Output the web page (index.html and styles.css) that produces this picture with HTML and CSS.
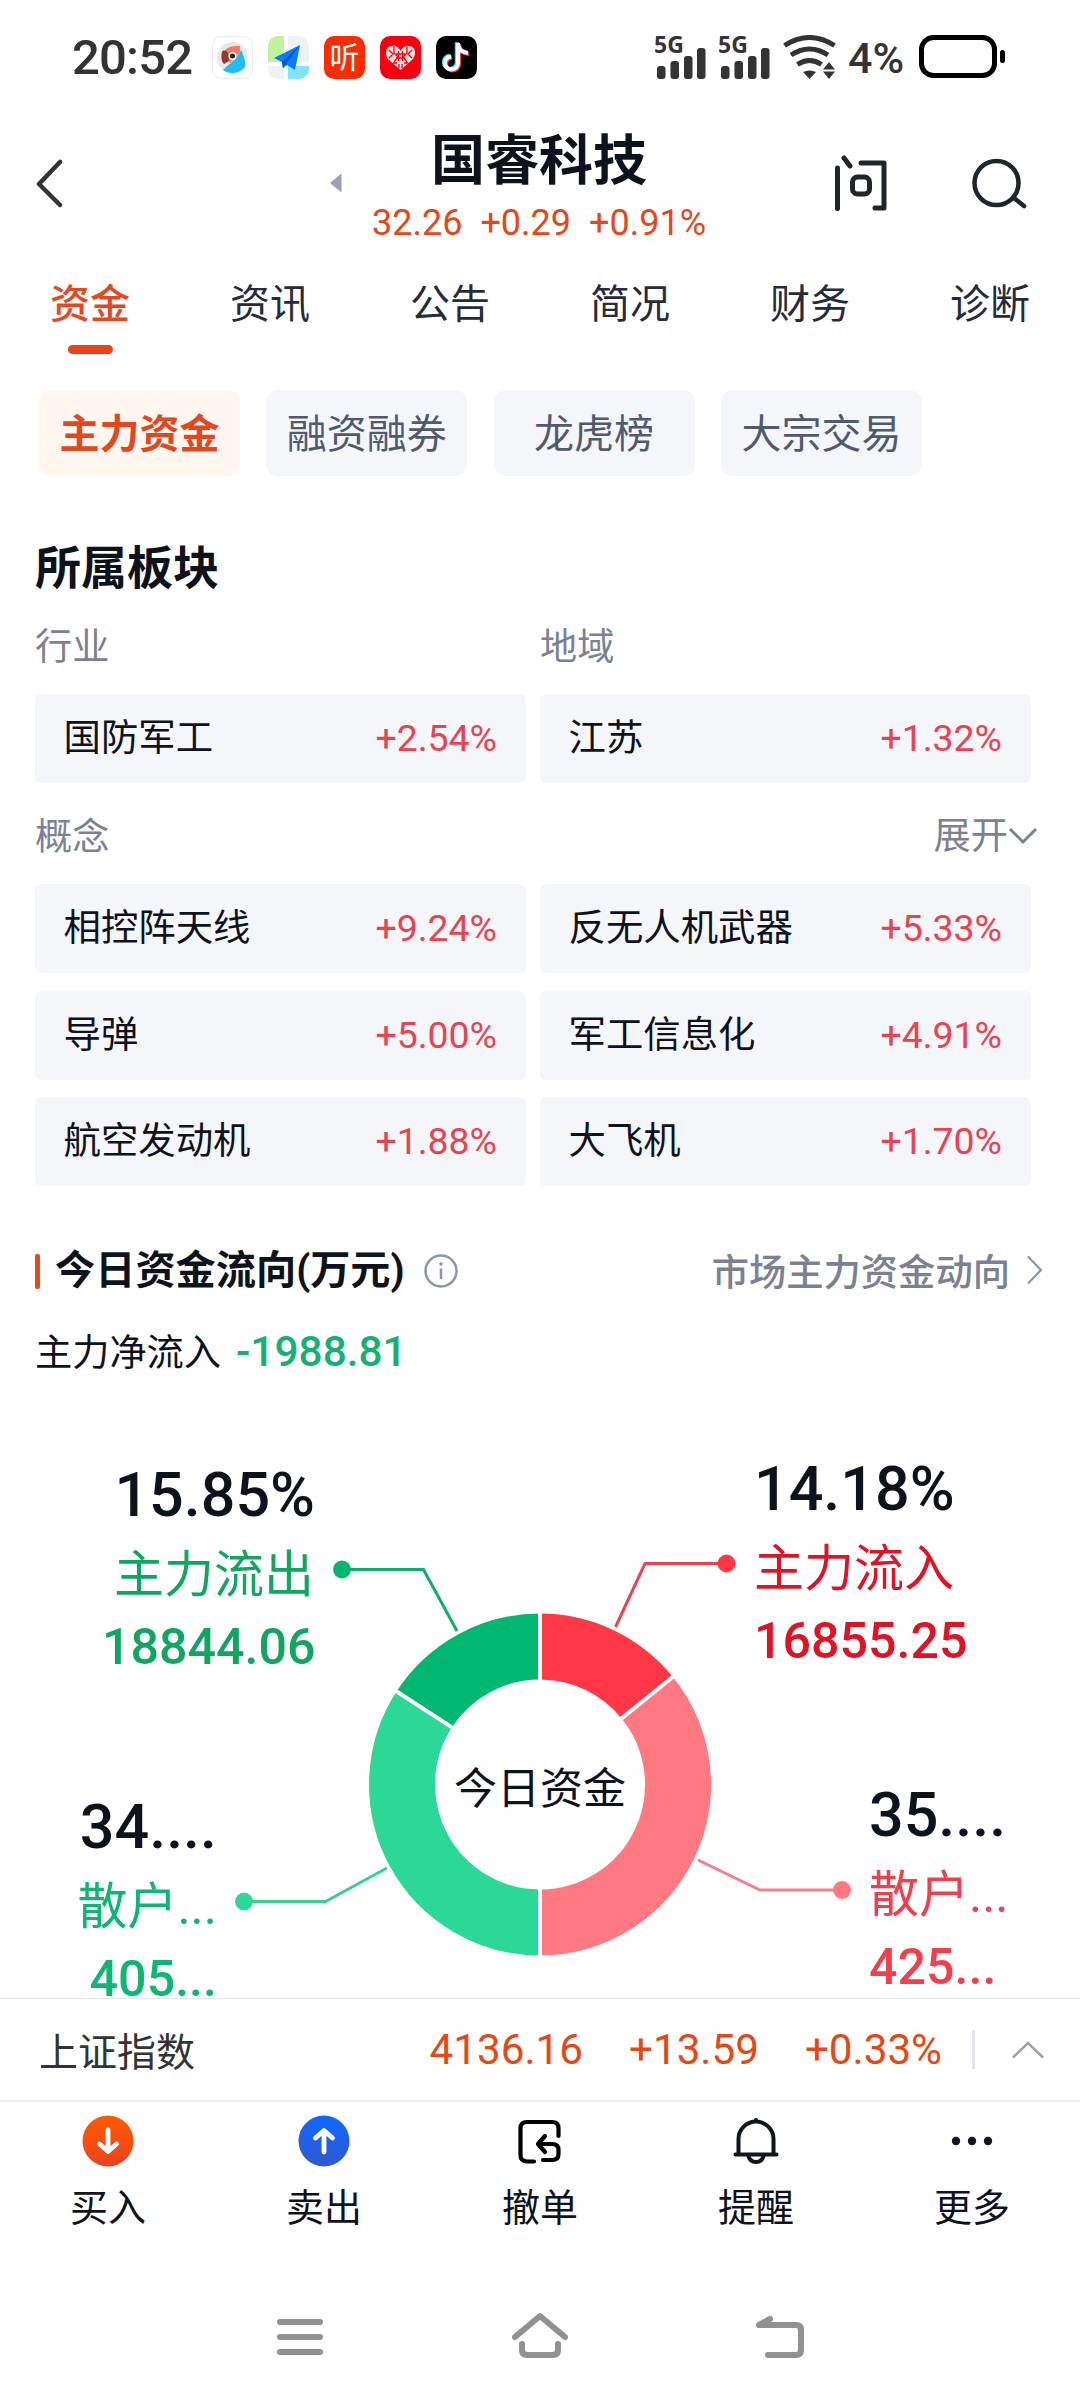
FILE: index.html
```html
<!DOCTYPE html>
<html lang="zh-CN">
<head>
    <meta charset="UTF-8">
    <meta name="viewport" content="width=device-width, initial-scale=1.0">
    <title>国睿科技 - 资金</title>
    <link rel="stylesheet" href="styles.css">
</head>
<body>
    <div class="status-bar">
        <div class="clock">20:52</div>
        <div class="apps">
            <svg width="41" height="43" viewBox="0 0 41 43">
                <rect x=".5" y=".5" width="40" height="42" rx="9" fill="#fff" stroke="#ececec"/>
                <circle cx="20.500" cy="21.500" r="15.500" fill="#e8e8e8"/>
                <path d="M29 14C32 20 34 27 33 31C27 39 16 38 11 34C17 28 24 24 29 14Z" fill="#1fbdf0"/>
                <path d="M13 14C17 10 22 10 28 10V16L18 27L13 22Z" fill="#ff7668"/>
                <path d="M10 16C11 14 14 14 16 17L17 25L12 28C9 25 9 20 10 16Z" fill="#923a2b"/>
                <circle cx="20.500" cy="20" r="4" fill="#fff"/>
                <circle cx="20.500" cy="20" r="2.500" fill="#152638"/>
            </svg>
            <svg width="41" height="43" viewBox="0 0 41 43">
                <clipPath id="mapClip"><rect width="41" height="43" rx="10"/></clipPath>
                <g clip-path="url(#mapClip)">
                    <rect width="41" height="43" fill="#edf2f2"/>
                    <rect width="16" height="26" fill="#c0f39e"/>
                    <rect x="20" y="30" width="21" height="13" fill="#80e4ff"/>
                    <path d="M18 0V43M0 28H41" stroke="#fff" stroke-width="4"/>
                </g>
                <path d="M32 9L6 22L14 26L15 32L19 29L27 34Z" fill="#087df8"/>
                <path d="M32 9L14 26L15 32L18 28Z" fill="#0757c9"/>
            </svg>
            <svg width="41" height="43" viewBox="0 0 41 43">
                <rect width="41" height="43" rx="10" fill="#fa2c04"/>
                <text class="ting" x="20.500" y="32" text-anchor="middle">听</text>
            </svg>
            <svg width="41" height="43" viewBox="0 0 41 43">
                <rect width="41" height="43" rx="10" fill="#f5000f"/>
                <path d="M20.500 34L8 23C4 17 6 10 12 10C16 9 19 12 20.500 15C22 12 25 9 29 10C35 10 37 17 33 23Z" fill="#ffdfe0"/>
                <path d="M9 14l4 4-4 4m5-12v7l4 4-4 5m13-16v7l-4 4 4 5m5-12l-4 4 4 4M16 18h9M16 22h9M18.500 15v10m4-10v10M13 27h4m7 0h4m-9 1v4m3-4v4" fill="none" stroke="#f5000f" stroke-width="1.300"/>
            </svg>
            <svg width="41" height="43" viewBox="0 0 41 43">
                <rect width="41" height="43" rx="10" fill="#000"/>
                <g fill="none" stroke-width="4">
                    <path d="M22 7V27A6.500 6.500 0 1 1 15 20.500M22 8C23 14 27 17 32 17" stroke="#25f4ee" transform="translate(-1.200 -.800)"/>
                    <path d="M22 7V27A6.500 6.500 0 1 1 15 20.500M22 8C23 14 27 17 32 17" stroke="#fe2c55" transform="translate(1.200 1)"/>
                    <path d="M22 7V27A6.500 6.500 0 1 1 15 20.500M22 8C23 14 27 17 32 17" stroke="#fff"/>
                </g>
            </svg>
        </div>
        <div class="signals">
            <div class="signal">
                <span>5G</span>
                <svg width="49" height="31" viewBox="0 0 49 31" fill="#333">
                    <rect x="0" y="18" width="8.500" height="13" rx="3"/><rect x="13.500" y="13" width="8.500" height="18" rx="3"/><rect x="27" y="8" width="8.500" height="23" rx="3"/><rect x="40" y="0" width="8.500" height="31" rx="3"/>
                </svg>
            </div>
            <div class="signal">
                <span>5G</span>
                <svg width="49" height="31" viewBox="0 0 49 31" fill="#333">
                    <rect x="0" y="18" width="8.500" height="13" rx="3"/><rect x="13.500" y="13" width="8.500" height="18" rx="3"/><rect x="27" y="8" width="8.500" height="23" rx="3"/><rect x="40" y="0" width="8.500" height="31" rx="3"/>
                </svg>
            </div>
            <svg class="wifi" width="54" height="44" viewBox="0 0 54 44">
                <g fill="none" stroke="#333" stroke-width="5">
                    <path d="M1.500 10.500Q26.500-5.500 51.500 10.500M8 20Q26.500 8 45 20M14.500 29.500Q26.500 21.500 38.500 29.500"/>
                </g>
                <path d="M20 37Q26.500 34 33 37L26.500 44Z" fill="#333"/>
                <path d="M40 34.500L46 27L52 34.500ZM40 36.500L46 44L52 36.500Z" fill="#333"/>
            </svg>
        </div>
        <div class="battery-text">4%</div>
        <svg class="battery" width="87" height="43" viewBox="0 0 87 43">
            <rect x="2.500" y="2.500" width="73" height="38" rx="12" fill="none" stroke="#000" stroke-width="5"/>
            <rect x="81" y="15" width="5" height="13" rx="2.500"/>
        </svg>
    </div>

    <div class="header">
        <svg class="back" width="30" height="50" viewBox="0 0 30 50"><path d="M25 3L4 25L25 46" fill="none" stroke="#333" stroke-width="4.500" stroke-linecap="round" stroke-linejoin="round"/></svg>
        <svg class="prev" width="12" height="20" viewBox="0 0 12 20"><path d="M11.500.500V19.500L1 11Q0 10 1 9Z" fill="#9aa1b3"/></svg>
        <div class="stock">
            <h1>国睿科技</h1>
            <div class="quote"><span>32.26</span><span>+0.29</span><span>+0.91%</span></div>
        </div>
        <svg class="ask" width="54" height="58" viewBox="0 0 54 58" fill="none" stroke="#20242b" stroke-width="5" stroke-linecap="round" stroke-linejoin="round">
            <path d="M3.500 13V53.500M10 3L16 11M27 8H50V53H41"/>
            <rect x="18.500" y="22" width="17" height="17" rx="5"/>
        </svg>
        <svg class="search" width="56" height="54" viewBox="0 0 56 54" fill="none" stroke="#20242b" stroke-width="4.500" stroke-linecap="round">
            <circle cx="25.500" cy="26" r="22"/><path d="M43 41L53 49"/>
        </svg>
    </div>

    <div class="tabs">
        <div class="tab active">资金</div>
        <div class="tab">资讯</div>
        <div class="tab">公告</div>
        <div class="tab">简况</div>
        <div class="tab">财务</div>
        <div class="tab">诊断</div>
    </div>

    <div class="pills">
        <div class="pill active">主力资金</div>
        <div class="pill">融资融券</div>
        <div class="pill">龙虎榜</div>
        <div class="pill">大宗交易</div>
    </div>

    <div class="sectors">
        <h2>所属板块</h2>
        <div class="labels"><span>行业</span><span>地域</span></div>
        <div class="grid">
            <div class="sector"><span>国防军工</span><span class="up">+2.54%</span></div>
            <div class="sector"><span>江苏</span><span class="up">+1.32%</span></div>
        </div>
        <div class="labels concept">
            <span>概念</span>
            <span class="expand">展开<svg width="30" height="20" viewBox="0 0 30 20"><path d="M2 3L15 16L28 3" fill="none" stroke="#7a8193" stroke-width="3"/></svg></span>
        </div>
        <div class="grid">
            <div class="sector"><span>相控阵天线</span><span class="up">+9.24%</span></div>
            <div class="sector"><span>反无人机武器</span><span class="up">+5.33%</span></div>
            <div class="sector"><span>导弹</span><span class="up">+5.00%</span></div>
            <div class="sector"><span>军工信息化</span><span class="up">+4.91%</span></div>
            <div class="sector"><span>航空发动机</span><span class="up">+1.88%</span></div>
            <div class="sector"><span>大飞机</span><span class="up">+1.70%</span></div>
        </div>
    </div>

    <div class="flow">
        <div class="flow-head">
            <h3>今日资金流向(万元)</h3>
            <svg width="36" height="36" viewBox="0 0 36 36"><circle cx="18" cy="18" r="15.500" fill="none" stroke="#8e95a6" stroke-width="2.500"/><path d="M18 15.500V26" stroke="#8e95a6" stroke-width="2.500"/><circle cx="18" cy="11" r="1.800" fill="#8e95a6"/></svg>
            <a class="market">市场主力资金动向<svg width="18" height="30" viewBox="0 0 18 30"><path d="M2 1.500L15 15L2 28.500" fill="none" stroke="#8e95a6" stroke-width="2.200"/></svg></a>
        </div>
        <div class="net">主力净流入<span>-1988.81</span></div>
    </div>

    <!-- fund flow donut -->
    <svg class="donut" width="1080" height="621" viewBox="0 1377 1080 621">
        <g fill="none" stroke-width="66">
            <path d="M540 1646.500A138 138 0 0 1 647.250 1697.650" stroke="#ff3747"/>
            <path d="M647.250 1697.650A138 138 0 0 1 540 1922.500" stroke="#ff7983"/>
            <path d="M540 1922.500A138 138 0 0 1 424.300 1709.300" stroke="#2cd897"/>
            <path d="M424.300 1709.300A138 138 0 0 1 540 1646.500" stroke="#02b871"/>
        </g>
        <path d="M540 1610V1682M540 1887V1959M619.200 1720.400L675.100 1675M453.600 1728.400L393.200 1689.200" stroke="#fff" stroke-width="4"/>
        <g fill="none" stroke-width="3">
            <path d="M342 1569.500H423.500L457 1631" stroke="#12ad6e"/>
            <path d="M726 1563.500H645L615.500 1627" stroke="#e84452"/>
            <path d="M244 1901.500H325.500L387 1868" stroke="#38cf96"/>
            <path d="M842 1890H760L698 1860" stroke="#f2808a"/>
        </g>
        <circle cx="342" cy="1569.500" r="9" fill="#02b871"/>
        <circle cx="726.500" cy="1563.500" r="9" fill="#ff3747"/>
        <circle cx="244" cy="1901.500" r="9" fill="#2cd897"/>
        <circle cx="842" cy="1890" r="9" fill="#ff7983"/>
        <text class="center" x="540" y="1804" text-anchor="middle">今日资金</text>
        <g text-anchor="end">
            <text class="percent" x="315" y="1515.500">15.85%</text>
            <text class="name out" x="314" y="1591.500">主力流出</text>
            <text class="amount out" x="315.500" y="1663.500">18844.06</text>
            <text class="percent" x="217" y="1847.500">34....</text>
            <text class="name out-light" x="217" y="1923.500">散户...</text>
            <text class="amount out-light" x="217" y="1995.500">405...</text>
        </g>
        <text class="percent" x="754" y="1509.500">14.18%</text>
        <text class="name in" x="754" y="1585.500">主力流入</text>
        <text class="amount in" x="754" y="1657.500">16855.25</text>
        <text class="percent" x="869" y="1835.500">35....</text>
        <text class="name in-light" x="869" y="1911.500">散户...</text>
        <text class="amount in-light" x="869" y="1983.500">425...</text>
    </svg>

    <div class="index-bar">
        <span class="index-name">上证指数</span>
        <span class="value">4136.16</span>
        <span class="value">+13.59</span>
        <span class="value">+0.33%</span>
        <i></i>
        <svg width="34" height="20" viewBox="0 0 34 20"><path d="M2 17.500L17 3L32 17.500" fill="none" stroke="#9aa1b0" stroke-width="2.500"/></svg>
    </div>

    <div class="toolbar">
        <div class="tool">
            <svg width="52" height="52" viewBox="0 0 52 52">
                <linearGradient id="buy" x1="0" y1="0" x2="0" y2="1"><stop stop-color="#ff5c00"/><stop offset="1" stop-color="#eb4120"/></linearGradient>
                <circle cx="26" cy="26" r="25.500" fill="url(#buy)"/><path d="M26 15V36M17.500 29L26 36.500L34.500 29" fill="none" stroke="#fff" stroke-width="4.800" stroke-linecap="round" stroke-linejoin="round"/>
            </svg>
            买入
        </div>
        <div class="tool">
            <svg width="52" height="52" viewBox="0 0 52 52">
                <linearGradient id="sell" x1="0" y1="0" x2="0" y2="1"><stop stop-color="#0f68ff"/><stop offset="1" stop-color="#3059cf"/></linearGradient>
                <circle cx="26" cy="26" r="25.500" fill="url(#sell)"/><path d="M26 37V16M17.500 23L26 15.500L34.500 23" fill="none" stroke="#fff" stroke-width="4.800" stroke-linecap="round" stroke-linejoin="round"/>
            </svg>
            卖出
        </div>
        <div class="tool">
            <svg width="52" height="52" viewBox="0 0 52 52" fill="none" stroke="#000" stroke-width="4.200" stroke-linecap="round" stroke-linejoin="round">
                <path d="M20 46.500H13Q6.500 46.500 6.500 40V13Q6.500 7 13 7H38Q44.500 7 44.500 13V21"/>
                <path d="M29 45H38Q44.500 45 44.500 39V35Q44.500 29 38 29H25M31 21L24 29L31 37"/>
            </svg>
            撤单
        </div>
        <div class="tool">
            <svg width="52" height="52" viewBox="0 0 52 52" fill="none" stroke="#11151d" stroke-width="4" stroke-linecap="round">
                <path d="M5.500 39.500H46.500M8.500 39V24A17.500 17.500 0 0 1 43.500 24V39M26 5V6"/>
                <path d="M18.500 41Q20 47 26 47Q32 47 33.500 41"/>
            </svg>
            提醒
        </div>
        <div class="tool">
            <svg width="52" height="52" viewBox="0 0 52 52" fill="#11151d"><circle cx="10" cy="26" r="4.200"/><circle cx="26" cy="26" r="4.200"/><circle cx="42" cy="26" r="4.200"/></svg>
            更多
        </div>
    </div>

    <div class="system-nav">
        <svg width="60" height="50" viewBox="0 0 60 50"><path d="M10 10H50M10 25H50M10 40H50"/></svg>
        <svg width="60" height="50" viewBox="0 0 60 50"><path d="M5 25L30 4L55 25M12 32V38Q12 43 17 43H43Q48 43 48 38V32"/></svg>
        <svg width="60" height="50" viewBox="0 0 60 50"><path d="M20 7L9 13H46Q51 13 51 18V38Q51 43 46 43H18"/></svg>
    </div>
</body>
</html>
```

FILE: styles.css
```css
* { box-sizing: border-box; }
body { margin: 0; width: 1080px; height: 2400px; overflow: hidden; background: #fff; color: #0d121d; font-family: Roboto, "Noto Sans CJK SC", sans-serif; display: flex; flex-direction: column; }
body > * { flex-shrink: 0; }
h1, h2, h3 { margin: 0; }
svg { display: block; flex-shrink: 0; }

.status-bar { height: 115px; padding: 0 74px 0 72px; display: flex; align-items: center; color: #333; }
.clock { width: 140px; font-size: 49px; font-weight: 500; line-height: 60px; letter-spacing: -0.8px; }
.apps { display: flex; gap: 15px; margin-top: -1px; }
.ting { font-size: 30px; fill: #fff; }
.signals { display: flex; align-items: flex-end; margin: 0 0 2px auto; gap: 15px; }
.signal { width: 49px; height: 44px; display: flex; flex-direction: column; justify-content: flex-end; position: relative; }
.signal span { position: absolute; left: -3px; top: -3px; font: bold 23px/24px "Noto Sans", sans-serif; }
.wifi { margin-left: -2px; }
.battery-text { margin-left: 11px; width: 71px; font-size: 43px; font-weight: 500; line-height: 60px; }
.battery { margin-top: -2px; }

.header { height: 145px; display: flex; align-items: flex-start; padding-left: 35px; }
.back { margin-top: 44px; }
.prev { margin: 58px 0 0 265px; }
.stock { width: 394px; display: flex; flex-direction: column; align-items: center; padding-top: 17px; }
.stock h1 { font-size: 54px; font-weight: bold; line-height: 60px; }
.quote { display: flex; gap: 18px; margin-top: 9px; font-size: 36px; line-height: 44px; color: #e2481c; }
.ask { margin: 40px 0 0 98px; }
.search { margin: 42px 0 0 83px; }

.tabs { height: 105px; display: flex; }
.tab { width: 180px; padding-top: 15px; text-align: center; font-size: 40px; line-height: 60px; color: #252b3a; }
.tab.active { font-weight: 500; color: #e5481e; }
.tab.active::after { content: ""; display: block; width: 45px; height: 9px; margin: 10px auto 0; border-radius: 5px; background: #ee431a; }

.pills { display: flex; gap: 26.3px; margin: 25px 0 0 39px; }
.pill { width: 201px; height: 86px; border-radius: 12px; background: #f5f6fa; color: #505a6e; font-size: 40px; line-height: 90px; text-align: center; }
.pill.active { background: #fff6f0; color: #e2481f; font-weight: bold; }

.sectors { width: 996px; margin: 62px 0 0 35px; }
.sectors h2 { font-size: 46px; line-height: 60px; font-weight: bold; }
.labels { display: grid; grid-template-columns: 491px 491px; column-gap: 14px; margin: 23px 0; height: 50px; line-height: 53px; font-size: 37.2px; color: #7a8193; }
.concept { margin-top: 28px; display: flex; justify-content: space-between; }
.expand { display: flex; align-items: center; margin-right: -7px; }
.grid { display: grid; grid-template-columns: 491px 491px; column-gap: 14px; row-gap: 17.5px; }
.sector { display: flex; justify-content: space-between; height: 89px; padding: 0 29px 0 28.5px; border-radius: 6px; background: #f5f6fa; font-size: 37.4px; line-height: 88px; }
.up { color: #e84350; }

.flow { padding: 60px 36px 0 35px; }
.flow-head { display: flex; align-items: center; height: 50px; }
.flow-head h3 { display: flex; align-items: center; margin-right: 18px; font-size: 40.2px; line-height: 50px; font-weight: bold; }
.flow-head h3::before { content: ""; width: 5px; height: 35px; margin-right: 15px; border-radius: 2px; background: #e5491f; }
.market { display: flex; align-items: center; gap: 16px; height: 50px; margin: -2px 0 0 auto; color: #7a8193; font-size: 37.3px; font-weight: 500; }
.net { margin-top: 31px; height: 50px; line-height: 50px; font-size: 37.2px; }
.net span { margin-left: 15px; font-size: 42.4px; font-weight: 500; color: #16b074; }

.donut { overflow: visible; }
.donut .center { font-size: 43px; }
.donut text { fill: #0d121d; }
.donut .percent { font-size: 61px; font-weight: 500; }
.donut .name { font-size: 50px; }
.donut .amount { font-size: 50.2px; font-weight: 500; }
.donut .out { fill: #0fa662; }
.donut .in { fill: #e01225; }
.donut .out-light { fill: #0fb573; }
.donut .in-light { fill: #f23e4d; }

.index-bar { height: 104px; border-top: 1px solid #e4e5e8; border-bottom: 2px solid #ebecef; display: flex; align-items: center; padding: 0 35px 0 39px; color: #333; font-size: 39px; }
.index-name { margin: -2px auto 0 0; }
.value { margin-left: 46px; color: #e54815; font-size: 42.2px; }
.index-bar i { width: 3px; height: 39px; margin: 0 36px 0 30px; background: #e3e6ea; }

.toolbar { display: flex; height: 168px; padding-top: 13px; }
.tool { width: 216px; display: flex; flex-direction: column; align-items: center; gap: 15px; font-size: 38px; line-height: 52px; }

.system-nav { display: flex; justify-content: center; gap: 180px; padding-top: 42px; }
.system-nav svg { fill: none; stroke: #919191; stroke-width: 6; stroke-linecap: round; stroke-linejoin: round; }
```
